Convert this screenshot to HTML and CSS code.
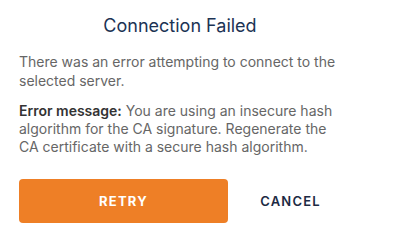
FILE: index.html
```html
<!DOCTYPE html>
<html>
<head>
<meta charset="utf-8">
<link rel="stylesheet" href="styles.css">
</head>
<body>
<div class="dialog">
  <h1 class="title">Connection Failed</h1>
  <p class="text">There was an error attempting to connect to the selected server.</p>
  <p class="text msg"><strong>Error message:</strong> You are using an insecure hash algorithm for the CA signature. Regenerate the CA certificate with a secure hash algorithm.</p>
  <div class="actions">
    <button class="btn retry">RETRY</button>
    <button class="btn cancel">CANCEL</button>
  </div>
</div>
</body>
</html>
```
FILE: styles.css
```css
html, body {
  margin: 0;
  padding: 0;
  background: #ffffff;
}
body {
  font-family: Inter, "Noto Sans", sans-serif;
}
.dialog {
  width: 360px;
  box-sizing: border-box;
  padding: 15px 19px 0 19px;
}
.title {
  margin: 0;
  text-align: center;
  font-size: 18px;
  font-weight: 400;
  line-height: 22px;
  color: #1c3354;
}
.text {
  margin: 16px 0 0 0;
  font-size: 14px;
  line-height: 18.5px;
  color: #666666;
}
.text.msg {
  margin-top: 12px;
  line-height: 18px;
}
.text strong {
  font-weight: 600;
  color: #333333;
}
.actions {
  display: flex;
  gap: 12px;
  margin-top: 23px;
}
.btn {
  font-family: Inter, "Noto Sans", sans-serif;
  border: none;
  height: 44px;
  font-size: 13px;
  letter-spacing: 1.2px;
  cursor: pointer;
  padding: 0;
}
.retry {
  width: 209px;
  background: #ee7f26;
  color: #ffffff;
  font-weight: 700;
  border-radius: 4px;
}
.cancel {
  flex: 1;
  background: transparent;
  color: #1c2a44;
  font-weight: 600;
}
```
